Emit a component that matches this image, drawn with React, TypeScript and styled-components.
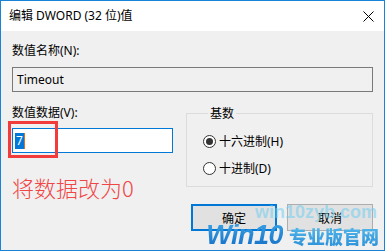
import React from "react";
import styled, { createGlobalStyle } from "styled-components";

const Global = createGlobalStyle`
  html, body { margin: 0; padding: 0; background: #f0f0f0; }
  body { font-family: "Segoe UI", "Noto Sans", "Noto Sans CJK SC", sans-serif; font-size: 12px; color: #000; }
`;

const Window = styled.div`
  position: relative;
  box-sizing: border-box;
  width: 385px;
  height: 251px;
  border: 1px solid #1883d7;
  display: flex;
  flex-direction: column;
  background: #f0f0f0;
  overflow: hidden;
`;

const TitleBar = styled.div`
  height: 30px;
  flex: none;
  background: #fff;
  display: flex;
  align-items: center;
  justify-content: space-between;
  padding: 0 10px 0 8px;
`;

const Title = styled.span`
  font-family: "Noto Sans", "Noto Sans CJK SC", sans-serif;
  font-size: 12px;
  line-height: 16px;
  color: #000;
`;

const Body = styled.div`
  flex: 1;
  padding: 12px 11px 0 11px;
  display: flex;
  flex-direction: column;
`;

const Label = styled.div<{ $mt?: number }>`
  font-family: "Noto Sans", "Noto Sans CJK SC", sans-serif;
  font-size: 12px;
  line-height: 16px;
  margin-top: ${(p) => p.$mt ?? 0}px;
`;

const ReadOnlyBox = styled.div`
  box-sizing: border-box;
  margin-top: 8px;
  height: 25px;
  border: 1px solid #7a7a7a;
  background: #f0f0f0;
  display: flex;
  align-items: center;
  padding-left: 4px;
  font-family: "Noto Sans", "Noto Sans CJK SC", sans-serif;
  font-size: 12px;
`;

const Columns = styled.div`
  display: grid;
  grid-template-columns: 161px 1fr;
  column-gap: 13px;
  margin-top: 13px;
  align-items: start;
`;

const LeftCol = styled.div`
  display: flex;
  flex-direction: column;
`;

const RightCol = styled.div`
  display: flex;
  flex-direction: column;
`;

const InputWrap = styled.div`
  position: relative;
  margin-top: 7px;
`;

const ValueInput = styled.div`
  box-sizing: border-box;
  height: 25px;
  border: 1px solid #0078d7;
  background: #fff;
  display: flex;
  align-items: center;
  padding-left: 2px;
  font-family: "Noto Sans", sans-serif;
  font-size: 12px;
`;

const Selected = styled.span`
  background: #0078d7;
  color: #fff;
  line-height: 16px;
  padding: 0 1px;
`;

const Caret = styled.span`
  display: inline-block;
  width: 1px;
  height: 16px;
  background: #e07020;
`;

const RedMark = styled.div`
  position: absolute;
  left: -4px;
  top: -7px;
  width: 50px;
  height: 37px;
  box-sizing: border-box;
  border: 3px solid #f23c3c;
`;

const Note = styled.div`
  margin-top: 21px;
  font-family: "Noto Sans CJK SC", sans-serif;
  font-weight: 300;
  font-size: 22px;
  line-height: 26px;
  color: #f04646;
  white-space: nowrap;
`;

const Group = styled.fieldset`
  margin: 0;
  padding: 10px 0 8px 16px;
  border: 1px solid #dcdcdc;
  display: flex;
  flex-direction: column;
  gap: 7px;
  min-width: 0;
`;

const Legend = styled.legend`
  margin-left: 5px;
  padding: 0 2px;
  font-family: "Noto Sans CJK SC", sans-serif;
  font-size: 12px;
  line-height: 16px;
`;

const RadioRow = styled.div`
  height: 20px;
  display: flex;
  align-items: center;
  gap: 3px;
  font-family: "Noto Sans", "Noto Sans CJK SC", sans-serif;
  font-size: 12px;
`;

const RadioCircle = styled.span<{ $checked?: boolean }>`
  box-sizing: border-box;
  width: 13px;
  height: 13px;
  border-radius: 50%;
  border: 1px solid #333;
  background: #fff;
  display: flex;
  align-items: center;
  justify-content: center;
  &::after {
    content: "";
    width: 7px;
    height: 7px;
    border-radius: 50%;
    background: ${(p) => (p.$checked ? "#333" : "transparent")};
  }
`;

const Buttons = styled.div`
  margin-top: 17px;
  display: flex;
  justify-content: flex-end;
  gap: 10px;
`;

const Button = styled.div<{ $default?: boolean }>`
  box-sizing: border-box;
  width: 86px;
  height: 27px;
  background: #e1e1e1;
  border: ${(p) => (p.$default ? "2px solid #0078d7" : "1px solid #adadad")};
  display: flex;
  align-items: center;
  justify-content: center;
  font-family: "Noto Sans CJK SC", sans-serif;
  font-size: 12px;
`;

const Watermark = styled.div`
  position: absolute;
  right: 5px;
  bottom: 1px;
  display: flex;
  flex-direction: column;
  align-items: flex-end;
  pointer-events: none;
`;

const WaterUrl = styled.div`
  font-family: "Liberation Sans", sans-serif;
  font-weight: 700;
  font-size: 18px;
  line-height: 20px;
  color: rgba(110, 205, 240, 0.55);
  margin-right: 2px;
`;

const WaterLine = styled.div`
  display: flex;
  align-items: baseline;
  gap: 6px;
  line-height: 26px;
`;

const WaterWin = styled.span`
  font-family: "Liberation Sans", sans-serif;
  font-style: italic;
  font-weight: 700;
  font-size: 27px;
  letter-spacing: -0.5px;
  background: linear-gradient(180deg, #3aa2e4 0%, #1570c8 100%);
  -webkit-background-clip: text;
  background-clip: text;
  color: transparent;
`;

const WaterCn = styled.span`
  font-family: "Noto Sans CJK SC", sans-serif;
  font-weight: 900;
  font-size: 18px;
  background: linear-gradient(180deg, #58bdec 0%, #2a8ed8 100%);
  -webkit-background-clip: text;
  background-clip: text;
  color: transparent;
`;

const CloseIcon = () => (
  <svg width="11" height="11" viewBox="0 0 11 11">
    <path d="M0.5 0.5 L10.5 10.5 M10.5 0.5 L0.5 10.5" stroke="#000" strokeWidth="1" fill="none" />
  </svg>
);

export default function App() {
  return (
    <>
      <Global />
      <Window>
        <TitleBar>
          <Title>编辑 DWORD (32 位)值</Title>
          <CloseIcon />
        </TitleBar>
        <Body>
          <Label>数值名称(N):</Label>
          <ReadOnlyBox>Timeout</ReadOnlyBox>
          <Columns>
            <LeftCol>
              <Label>数值数据(V):</Label>
              <InputWrap>
                <ValueInput>
                  <Selected>7</Selected>
                  <Caret />
                </ValueInput>
                <RedMark />
              </InputWrap>
              <Note>将数据改为0</Note>
            </LeftCol>
            <RightCol>
              <Group>
                <Legend>基数</Legend>
                <RadioRow>
                  <RadioCircle $checked />
                  十六进制(H)
                </RadioRow>
                <RadioRow>
                  <RadioCircle />
                  十进制(D)
                </RadioRow>
              </Group>
              <Buttons>
                <Button $default>确定</Button>
                <Button>取消</Button>
              </Buttons>
            </RightCol>
          </Columns>
        </Body>
        <Watermark>
          <WaterUrl>win10zyb.com</WaterUrl>
          <WaterLine>
            <WaterWin>Win10</WaterWin>
            <WaterCn>专业版官网</WaterCn>
          </WaterLine>
        </Watermark>
      </Window>
    </>
  );
}
